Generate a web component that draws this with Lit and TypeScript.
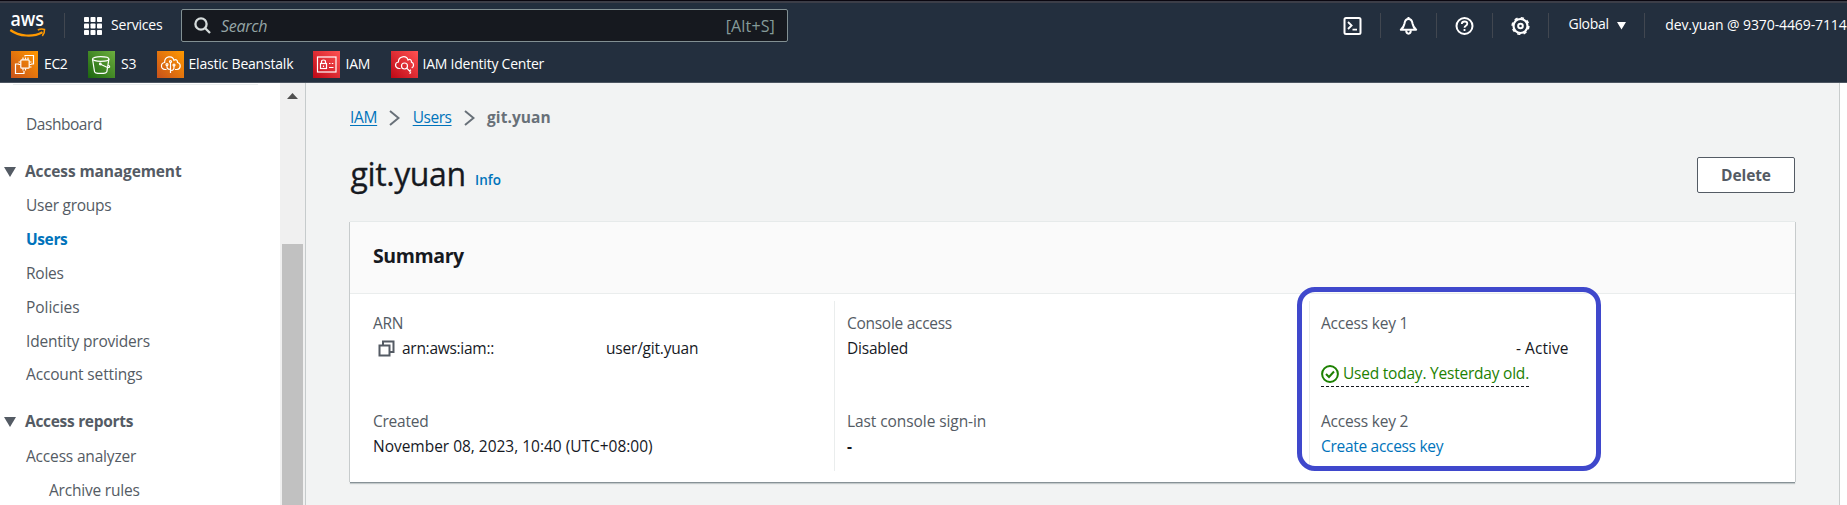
import { LitElement, html, css, svg } from "lit";
import { customElement, property } from "lit/decorators.js";
import { styleMap } from "lit/directives/style-map.js";
import { classMap } from "lit/directives/class-map.js";

// A run of text with optical tracking applied.
const t = (text: string, tracking = -0.25) =>
  html`<span style=${styleMap({ letterSpacing: `${tracking}px` })}>${text}</span>`;

const serviceGlyphs: Record<string, unknown> = {
  ec2: svg`<rect x="9.8" y="8.8" width="8.4" height="8.4" rx="1"/><path d="M12 8.5v-2M14.5 8.5v-2M17 8.5v-2M12 19.5v-2M14.5 19.500v-2M18.500 11h2M18.500 13.500h2M18.500 16h2M9.500 11h-2M9.500 13.500h-2M14 5.500h0V4.500h8.500V13h-2.500M8 13H4.500v9.500H13V20"/>`,
  s3: svg`<ellipse cx="12.700" cy="8" rx="8.200" ry="2.300"/><path d="M4.500 8l2 12.500c0 2.600 12.400 2.600 12.400 0L20.900 8M12.500 13.200l7.500 3.500c2.500 0 2-2-.3-2.700"/><circle cx="12.300" cy="13" r=".8"/>`,
  beanstalk: svg`<path d="M9.500 18.500H8c-4.800-.5-4.500-6.400-.4-7C7.600 5 15.500 3.800 17 9.300c2-1.400 3.700.1 3.500 2.200 3.800.8 3.600 6.500-.5 7h-2M13.500 22v-11M13.500 18.500c-4 0-3.500-2-3.500-4.500M13.500 19.500c4 0 3.500-2.500 3.500-5"/><circle cx="13.500" cy="10.500" r="1"/><circle cx="10" cy="13.500" r="1"/><circle cx="17" cy="14" r="1"/>`,
  iam: svg`<rect x="4.500" y="6" width="18.500" height="15"/><rect x="7.500" y="12.500" width="6" height="5"/><path d="M8.500 12.500v-1.700c0-2.400 4-2.400 4 0v1.700M10.500 14.500v1.500M16 12.500h1.500M18.800 12.500h1.500M16 16.500h4.500"/>`,
  identity: svg`<path d="M9.500 17.500H8c-4.500-.5-4.500-5.900-.6-6.500C7.400 4.800 15.500 4 17 9c2-1.400 3.700.1 3.500 2.200 2.800.8 2.600 4.500.2 5.800"/><circle cx="13.500" cy="15" r="3"/><path d="M15.700 17.200l4.300 4.300M18.500 20l1.400-1.300M20 21.500l-1.500 1"/>`,
};

const favorites = [
  { name: "EC2", glyph: "ec2", from: "#c8511b", to: "#ff9900", slot: 77, gap: 6, tracking: -0.4 },
  { name: "S3", glyph: "s3", from: "#1b660f", to: "#6cae3e", slot: 69, gap: 6, tracking: -0.3 },
  { name: "Elastic Beanstalk", glyph: "beanstalk", from: "#c8511b", to: "#ff9900", slot: 156, gap: 4.5, tracking: -0.2 },
  { name: "IAM", glyph: "iam", from: "#bd0816", to: "#ff5252", slot: 78, gap: 5.5, tracking: -0.2 },
  { name: "IAM Identity Center", glyph: "identity", from: "#bd0816", to: "#ff5252", slot: 160, gap: 4.5, tracking: -0.23 },
];

@customElement("console-header")
class ConsoleHeader extends LitElement {
  static styles = css`
    :host { display: block; height: 83px; box-sizing: border-box; background: #232f3e; color: #fff;
      border-bottom: 1px solid #4c5561; font: 14px/20px "Open Sans", "Noto Sans", sans-serif; white-space: nowrap; overflow: hidden; }
    .strip { height: 1px; background: #0a0710; border-bottom: 2px solid #3c3e48; }
    .bar { display: flex; height: 39px; align-items: flex-start; }
    .logo { margin: 1px 0 0 9px; width: 38px; height: 35px; overflow: visible; }
    .sep { width: 1px; height: 25px; background: #414750; margin-top: 10px; flex: none; }
    .sep.first { margin-left: 17px; }
    .grid { margin: 14px 9px 0 19px; }
    .services { width: 70px; margin-top: 12px; }
    .search { box-sizing: border-box; width: 607px; height: 33px; margin-top: 6px; border: 1px solid #829093; border-radius: 2px;
      background: #16191f; display: flex; align-items: center; padding: 0 12px 0 12px; font-size: 16px; color: #95a5a6; }
    .search .hint { font-style: italic; margin-left: 10px; flex: 1; }
    .search .key { color: #859b99; padding-top: 1px; }
    .tools { display: flex; margin-left: auto; width: 522px; flex: none; }
    .tool { width: 19px; height: 19px; margin: 13px 18px 0; flex: none; }
    .region { display: flex; gap: 8px; margin: 11px 18px 0 19.500px; width: 57.500px; }
    .region svg { margin-top: 2px; flex: none; }
    .account { margin: 12px 0 0 20.500px; width: 184px; }
    .favs { display: flex; margin: 9px 0 0 11px; }
    .fav { display: flex; align-items: center; height: 27px; }
    .tile { width: 27px; height: 27px; flex: none; }
    .label { padding-bottom: 1px; }
    svg { display: block; flex: none; }
    .line { fill: none; stroke: #fff; stroke-width: 1.2; }
  `;
  render() {
    return html`
      <div class="strip"></div>
      <div class="bar">
        <svg class="logo" viewBox="0 0 38 35">
          <text x="1.500" y="22" fill="#fff" font-size="20" font-weight="600" textLength="33.500" lengthAdjust="spacingAndGlyphs">aws</text>
          <path d="M1.300 26C10 32.500 24 33.500 33.500 28.200" fill="none" stroke="#ff9900" stroke-width="2.200"/>
          <path d="M28.800 26c2.500-1.300 5.500-1 6.700-.6.200 2-.6 4.700-2.200 6.500" fill="none" stroke="#ff9900" stroke-width="1.600"/>
        </svg>
        <i class="sep first"></i>
        <svg class="grid" width="18" height="18">${[0, 6.5, 13].map((y) => [0, 6.5, 13].map((x) => svg`<rect x=${x} y=${y} width="5" height="5" rx=".8" fill="#fff"/>`))}</svg>
        <div class="services">${t("Services", -0.2)}</div>
        <div class="search">
          <svg width="17" height="17" fill="none" stroke="#d5dbdb" stroke-width="2.300"><circle cx="7" cy="7" r="5.600"/><path d="M11 11l5 5"/></svg>
          <span class="hint">${t("Search", -0.3)}</span><span class="key">${t("[Alt+S]", 0.15)}</span>
        </div>
        <div class="tools">
          <svg class="tool" viewBox="0 0 19 19" fill="none" stroke="#fff" stroke-width="2"><rect x="1.500" y="2" width="16" height="16" rx="1.500"/><path d="M5 6l3.600 3.500L5 13M9.500 13.700H14" stroke-width="1.800"/></svg>
          <i class="sep"></i>
          <svg class="tool" viewBox="0 0 19 19" fill="none" stroke="#fff" stroke-width="2"><path d="M1.800 13.700c2.800-2.200 3.200-3.200 3.700-6.200C5.900 4.600 7.200 3 9.500 3s3.600 1.600 4 4.500c.5 3 .9 4 3.700 6.200z" stroke-linejoin="round"/><path d="M9.500 1v2M7.200 14.300c0 4.500 4.600 4.500 4.600 0"/></svg>
          <i class="sep"></i>
          <svg class="tool" viewBox="0 0 19 19" fill="none" stroke="#fff" stroke-width="2"><circle cx="9.500" cy="10" r="8"/><path d="M6.800 8c0-3.400 5.500-3.200 5.500-.2 0 2-2.800 2-2.800 4M9.500 13v2" stroke-width="1.800"/></svg>
          <i class="sep"></i>
          <svg class="tool" viewBox="0 0 19 19" fill="none" stroke="#fff"><circle cx="9.500" cy="10" r="7" stroke-width="2.200"/><circle cx="9.500" cy="10" r="8.300" stroke-width="1.600" stroke-dasharray="3.260 3.260"/><circle cx="9.500" cy="10" r="2.300" stroke-width="2"/></svg>
          <i class="sep"></i>
          <div class="region">${t("Global", -0.3)}<svg width="9" height="15"><path d="M0 6h9L4.500 13.500z" fill="#fff"/></svg></div>
          <i class="sep"></i>
          <div class="account">${t("dev.yuan @ 9370-4469-7114", -0.1)}</div>
        </div>
      </div>
      <div class="favs">
        ${favorites.map((f) => html`<div class="fav" style=${styleMap({ width: `${f.slot}px`, gap: `${f.gap}px` })}>
          <svg class="tile" viewBox="0 0 27 27">
            <defs><linearGradient id=${f.glyph} x1="0" y1="1" x2="1" y2="0"><stop stop-color=${f.from}/><stop offset="1" stop-color=${f.to}/></linearGradient></defs>
            <rect width="27" height="27" fill="url(#${f.glyph})"/><g class="line">${serviceGlyphs[f.glyph]}</g>
          </svg>
          <span class="label">${t(f.name, f.tracking)}</span></div>`)}
      </div>`;
  }
}

@customElement("side-nav")
class SideNav extends LitElement {
  static styles = css`
    :host { display: flex; width: 306px; box-sizing: border-box; border-right: 1px solid #c6cbcc; background: #fff; flex: none;
      font: 15.5px/33.9px "Open Sans", "Noto Sans", sans-serif; color: #545b64; white-space: nowrap; overflow: hidden; }
    .list { width: 280px; flex: none; }
    .rule { height: 1px; margin: 1px 22px 0 13px; background: #eaeded; }
    .item { padding-left: 26px; }
    .first { margin: 23px 0 13px; }
    .current { color: #0073bb; font-weight: 700; }
    .sub { padding-left: 49px; }
    .head { display: flex; align-items: center; font-weight: 700; gap: 9px; padding-left: 4px; height: 34px; }
    .second { margin-top: 12.800px; }
    .second + .item { margin-top: 0.600px; }
    .track { width: 25px; background: #f0f0f0; display: flex; flex-direction: column; align-items: center; }
    .track svg { margin-top: 10px; }
    .thumb { width: 21px; flex: 1; margin-top: 145px; background: #c1c1c1; }
  `;
  private head(label: string, tracking: number, second = false) {
    return html`<div class=${classMap({ head: true, second })}>
      <svg width="12" height="10"><path d="M0 0h12L6 10z" fill="#545b64"/></svg>${t(label, tracking)}</div>`;
  }
  render() {
    const item = (label: string, tracking: number, cls = "") => html`<div class="item ${cls}">${t(label, tracking)}</div>`;
    return html`
      <nav class="list">
        <div class="rule"></div>
        ${item("Dashboard", -0.45, "first")}
        ${this.head("Access management", -0.12)}
        ${item("User groups", -0.25)}
        ${item("Users", -0.4, "current")}
        ${item("Roles", -0.25)}
        ${item("Policies", -0.05)}
        ${item("Identity providers", -0.2)}
        ${item("Account settings", -0.15)}
        ${this.head("Access reports", -0.3, true)}
        ${item("Access analyzer", -0.18)}
        ${item("Archive rules", -0.2, "sub")}
      </nav>
      <div class="track"><svg width="11" height="6"><path d="M0 6L5.500 0 11 6z" fill="#505050"/></svg><div class="thumb"></div></div>`;
  }
}

@customElement("summary-field")
class SummaryField extends LitElement {
  @property() label = "";
  @property({ type: Number }) tracking = -0.25;
  static styles = css`
    :host { display: block; height: 98px; }
    .label { color: #545b64; }
  `;
  render() {
    return html`<div class="label">${t(this.label, this.tracking)}</div><slot></slot>`;
  }
}

@customElement("app-root")
class AppRoot extends LitElement {
  static styles = css`
    :host { display: block; height: 505px; overflow: hidden; background: #fff; color: #16191f;
      font: 15.5px/25px "Open Sans", "Noto Sans", sans-serif; white-space: nowrap; }
    .body { display: flex; height: 422px; }
    .main { box-sizing: border-box; width: 1534px; background: #f2f3f3; border-right: 1px solid #c8cccc; padding: 22px 44px 0 44px; }
    .crumbs { display: flex; align-items: center; height: 25px; }
    .crumbs a { color: #0073bb; text-decoration: underline; text-underline-offset: 2px; }
    .crumbs svg { margin: 1px 12.500px 0 12px; }
    .crumbs b { color: #687078; }
    .title { display: flex; height: 37px; margin-top: 27px; }
    h1 { margin: -2px 0 0 0.500px; font-size: 32px; line-height: 37px; font-weight: 400; width: 124.500px; -webkit-text-stroke: 0.3px #16191f; }
    .info { color: #0073bb; font-size: 13.500px; font-weight: 600; line-height: 46px; }
    .delete { box-sizing: border-box; margin-left: auto; width: 98px; height: 36px; border: 1px solid #545b64; border-radius: 2px; background: #fff;
      color: #545b64; font: 700 15.500px/32px "Open Sans", "Noto Sans", sans-serif; padding: 0; text-align: center; }
    .card { position: relative; height: 260px; margin-top: 28px; background: #fff; box-shadow: 0 1px 0 #879196, 0 2px 1px #c3c9ca, -1px 0 0 #c8cccd, 1px 0 0 #c8cccd, 0 -1px 0 #e6eaea; }
    .card header { height: 71px; background: #fafafa; border-bottom: 1px solid #eaeded; }
    h2 { margin: 0; padding: 20px 0 0 23px; font-size: 19.500px; line-height: 28px; }
    .cols { display: grid; grid-template-columns: 461px 475px 1fr; padding: 7px 0 0 23px; }
    .col { height: 170px; box-sizing: border-box; padding-top: 10px; }
    .col + .col { border-left: 1px solid #eaeded; padding-left: 12px; }
    .col + .col + .col { padding-left: 11px; }
    .arn { display: flex; align-items: center; padding-left: 4.500px; }
    .arn svg { margin: 0 7.500px 0 0; }
    .arn .owner { width: 204px; }
    .active { padding-left: 195px; }
    .used { display: inline-flex; align-items: center; color: #1d8102; gap: 4.500px; height: 25px; border-bottom: 1px dashed #16191f; width: 208px; }
    .link { color: #0073bb; }
    .none { font-weight: 700; }
    .marker { position: absolute; left: 947px; top: 65px; width: 304px; height: 184px; box-sizing: border-box; border: 5px solid #3f48cc; border-radius: 18px; }
  `;
  render() {
    const chevron = html`<svg width="11" height="16" fill="none" stroke="#687078" stroke-width="2"><path d="M1 1l8.500 7L1 15"/></svg>`;
    return html`
      <console-header></console-header>
      <div class="body">
        <side-nav></side-nav>
        <main class="main">
          <div class="crumbs"><a>${t("IAM", -0.3)}</a>${chevron}<a>${t("Users", -0.45)}</a>${chevron}<b>${t("git.yuan", 0.05)}</b></div>
          <div class="title">
            <h1>${t("git.yuan", -0.4)}</h1><span class="info">${t("Info", 0.05)}</span>
            <button class="delete">${t("Delete", -0.1)}</button>
          </div>
          <section class="card">
            <header><h2>${t("Summary", -0.4)}</h2></header>
            <div class="cols">
              <div class="col">
                <summary-field label="ARN" tracking="-0.35">
                  <div class="arn">
                    <svg width="17" height="17" fill="none" stroke="#545b64" stroke-width="2"><rect x="1.500" y="5.500" width="10" height="10"/><path d="M5 5V1.500h10.500V12H12"/></svg>
                    <span class="owner">${t("arn:aws:iam::", -0.28)}</span>${t("user/git.yuan", -0.2)}
                  </div>
                </summary-field>
                <summary-field label="Created" tracking="-0.25">${t("November 08, 2023, 10:40 (UTC+08:00)", -0.02)}</summary-field>
              </div>
              <div class="col">
                <summary-field label="Console access" tracking="-0.28">${t("Disabled", -0.2)}</summary-field>
                <summary-field label="Last console sign-in" tracking="-0.08"><span class="none">-</span></summary-field>
              </div>
              <div class="col">
                <summary-field label="Access key 1" tracking="-0.2">
                  <div class="active">${t("- Active", 0.05)}</div>
                  <div class="used"><svg width="18" height="18" fill="none" stroke="#1d8102" stroke-width="2"><circle cx="9" cy="9" r="7.900"/><path d="M5 9l3 3 5-5.500"/></svg>${t("Used today. Yesterday old.", -0.22)}</div>
                </summary-field>
                <summary-field label="Access key 2" tracking="-0.2"><span class="link">${t("Create access key", -0.3)}</span></summary-field>
              </div>
            </div>
            <div class="marker"></div>
          </section>
        </main>
      </div>`;
  }
}
